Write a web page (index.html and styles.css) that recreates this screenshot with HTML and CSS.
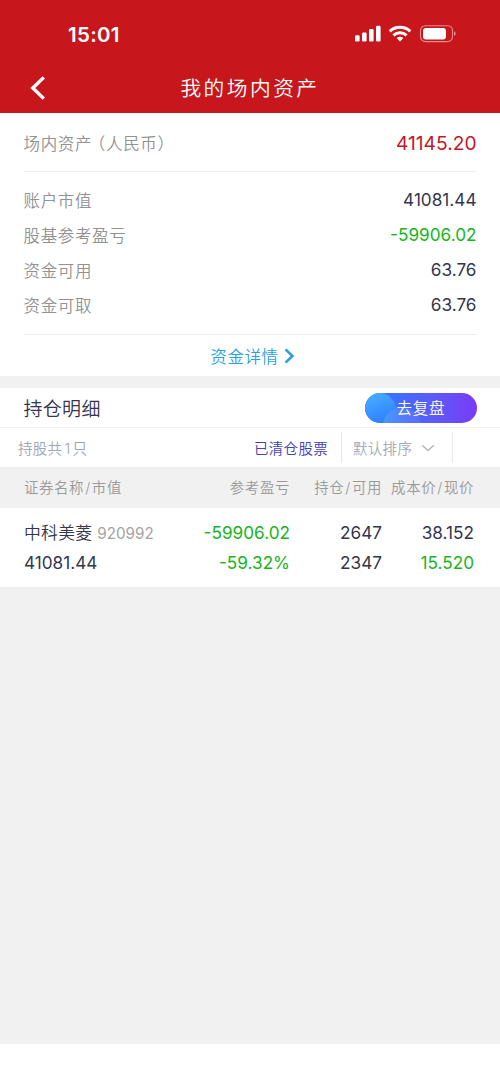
FILE: index.html
```html
<!DOCTYPE html>
<html lang="zh-CN">
	<head>
		<meta charset="utf-8">
		<title>我的场内资产</title>
		<link rel="stylesheet" href="styles.css">
	</head>
	<body>
		<div class="header">
			<div class="status">
				<span class="time">15:01</span>
				<svg class="status_icons" width="102" height="18" viewBox="0 0 102 18">
					<g fill="#fff">
						<rect x="1" y="10.2" width="4.6" height="6.3" rx="1.3"/>
						<rect x="8" y="7.5" width="4.6" height="9" rx="1.3"/>
						<rect x="15" y="4" width="4.6" height="12.5" rx="1.3"/>
						<rect x="22" y="0.8" width="4.6" height="15.7" rx="1.3"/>
						<path d="M46 16.4l-3.3-3.3a4.7 4.7 0 0 1 6.6 0z"/>
						<rect x="69" y="3" width="23" height="11.4" rx="3"/>
						<path d="M100 6.5v4.4c1.1-.4 1.7-1.2 1.7-2.2s-.6-1.8-1.7-2.2z" opacity=".5"/>
					</g>
					<g fill="none" stroke="#fff" stroke-width="2.9">
						<path d="M35.7 6.4a15 15 0 0 1 20.6 0"/>
						<path d="M39.4 10.4a9.6 9.6 0 0 1 13.2 0"/>
					</g>
					<rect x="66.5" y="0.8" width="32" height="15.8" rx="4.8" fill="none" stroke="#fff" stroke-width="1.1" opacity=".5"/>
				</svg>
			</div>
			<div class="nav">
				<svg class="back" width="16" height="24" viewBox="0 0 16 24"><path d="M13.8 1.4L2.8 12l11 10.6" fill="none" stroke="#fff" stroke-width="3.4"/></svg>
				<span class="title">我的场内资产</span>
			</div>
		</div>
		<div class="assets">
			<div class="row total">
				<span class="label">场内资产<span class="unit">（人民币）</span></span><span class="num">41145.20</span>
			</div>
			<div class="list">
				<div class="row"><span class="label">账户市值</span><span class="num">41081.44</span></div>
				<div class="row"><span class="label">股基参考盈亏</span><span class="num green">-59906.02</span></div>
				<div class="row"><span class="label">资金可用</span><span class="num">63.76</span></div>
				<div class="row"><span class="label">资金可取</span><span class="num">63.76</span></div>
			</div>
			<div class="detail">
				<span>资金详情</span>
				<svg width="11" height="16" viewBox="0 0 11 16"><path d="M1.6 1.4L8.4 8l-6.8 6.6" fill="none" stroke="#2b9fe0" stroke-width="2.6"/></svg>
			</div>
		</div>
		<div class="hold">
			<div class="hold_title">
				<span>持仓明细</span>
				<div class="replay">
					<svg class="bubbles" width="112" height="30" viewBox="0 0 112 30">
						<defs>
							<linearGradient id="b1" x1="0" y1="0" x2=".4" y2="1"><stop offset="0" stop-color="#4cb6ff"/><stop offset=".9" stop-color="#2f80ff"/></linearGradient>
							<linearGradient id="b2" x1="0" y1="0" x2="1" y2="0"><stop offset="0" stop-color="#4f9cff"/><stop offset="1" stop-color="#6a7cff" stop-opacity=".5"/></linearGradient>
						</defs>
						<circle cx="13" cy="18" r="18.5" fill="url(#b1)"/>
						<circle cx="37" cy="34" r="19.5" fill="url(#b2)" opacity=".8"/>
					</svg>
					<span class="replay_text">去复盘</span>
				</div>
			</div>
			<div class="filter">
				<span class="count">持股共<i>1</i>只</span>
				<span class="cleared">已清仓股票</span>
				<div class="sort">
					<span>默认排序</span>
					<svg width="14" height="8" viewBox="0 0 14 8"><path d="M1.2 1.3L7 6.5l5.8-5.2" fill="none" stroke="#b3b6c0" stroke-width="1.4"/></svg>
				</div>
			</div>
			<div class="grid thead">
				<span>证券名称<i>/</i>市值</span><span>参考盈亏</span><span>持仓<i>/</i>可用</span><span>成本价<i>/</i>现价</span>
			</div>
			<div class="stock">
				<div class="grid">
					<span class="first"><span class="name">中科美菱</span><span class="code">920992</span></span><span class="green">-59906.02</span><span>2647</span><span>38.152</span>
				</div>
				<div class="grid">
					<span>41081.44</span><span class="green">-59.32%</span><span>2347</span><span class="green">15.520</span>
				</div>
			</div>
		</div>
		<div class="bottom"></div>
	</body>
</html>
```
FILE: styles.css
```css
*{
	box-sizing:border-box;
}
body{
	margin:0;
	height:1084px;
	display:flex;
	flex-direction:column;
	background:#f1f1f1;
	color:#34364e;
	font-family:Inter,"Noto Sans CJK SC",sans-serif;
	font-size:17.2px;
	font-weight:350;
}
i{
	font-style:normal;
}
svg{
	display:block;
}
.header{
	height:113px;
	background:#c7171c;
	color:#fff;
}
.status{
	height:68px;
	padding:0 44px 0 68px;
	display:flex;
	align-items:center;
	justify-content:space-between;
}
.time{
	font-size:20.5px;
	font-weight:600;
	letter-spacing:.3px;
}
.nav{
	height:40px;
	display:grid;
	grid-template-columns:30px 1fr 30px;
	align-items:center;
	padding:0 30px;
}
.title{
	font-size:20.7px;
	letter-spacing:2.5px;
	line-height:24px;
	padding-top:2px;
	text-align:center;
}
.assets{
	height:263px;
	background:#fff;
	padding:0 23.5px;
}
.row{
	height:35px;
	display:flex;
	align-items:center;
	justify-content:space-between;
}
.label{
	color:#929292;
	font-size:16.5px;
	letter-spacing:.65px;
}
.unit{
	margin-left:5px;
	font-feature-settings:"halt";
}
.num{
	font-weight:400;
}
.total{
	height:59px;
	border-bottom:1px solid #eee;
	padding-top:2px;
}
.total .num{
	color:#c3182a;
	font-size:19.2px;
}
.list{
	height:163px;
	padding-top:10px;
	border-bottom:1px solid #eee;
}
.green{
	color:#18b41c;
}
.detail{
	height:41px;
	padding-left:5px;
	display:flex;
	align-items:center;
	justify-content:center;
	gap:5px;
	color:#2b9fe0;
	font-size:16.5px;
	letter-spacing:.6px;
}
.hold{
	margin-top:12px;
	background:#fff;
}
.hold_title{
	height:40px;
	padding:0 23.5px;
	display:flex;
	align-items:center;
	justify-content:space-between;
	border-bottom:1px solid #f0f0f0;
	font-size:19px;
	letter-spacing:.3px;
}
.replay{
	position:relative;
	width:112px;
	height:30px;
	border-radius:15px;
	overflow:hidden;
	background:linear-gradient(90deg,#2f80ff,#4a66fc 40%,#5b5cfa 60%,#7a3af5);
}
.replay_text{
	position:absolute;
	left:32px;
	top:1px;
	line-height:30px;
	color:#fff;
	font-size:15.5px;
	letter-spacing:.8px;
}
.filter{
	height:39px;
	padding:0 47px 0 18px;
	display:flex;
	align-items:center;
	font-size:14.5px;
	letter-spacing:.3px;
}
.count{
	flex:1;
	color:#a0a4b6;
}
.count i{
	margin:0 2px;
}
.cleared{
	color:#4540b0;
	margin-right:13px;
}
.sort{
	width:112px;
	height:31px;
	padding:0 11px;
	display:flex;
	align-items:center;
	gap:9px;
	border:solid #e6e6ec;
	border-width:0 1px;
	color:#a4a8b6;
}
.grid{
	display:grid;
	grid-template-columns:156px 110px 92px 92px;
	align-items:center;
	padding:0 26px 0 24px;
}
.grid > span{
	text-align:right;
	white-space:nowrap;
}
.grid > span:first-child{
	text-align:left;
}
.thead{
	height:41px;
	padding-bottom:2px;
	background:#f1f1f1;
	color:#999;
	font-size:14.4px;
	letter-spacing:.65px;
}
.thead i{
	margin:0 1px;
}
.stock{
	height:79px;
	padding-top:9px;
	font-weight:400;
}
.stock .grid{
	height:30px;
}
.name{
	font-size:16.8px;
	font-weight:350;
	letter-spacing:.3px;
}
.code{
	margin-left:5px;
	color:#a3a3a3;
	font-size:15.2px;
}
.bottom{
	margin-top:auto;
	height:40px;
	background:#fff;
}
```
